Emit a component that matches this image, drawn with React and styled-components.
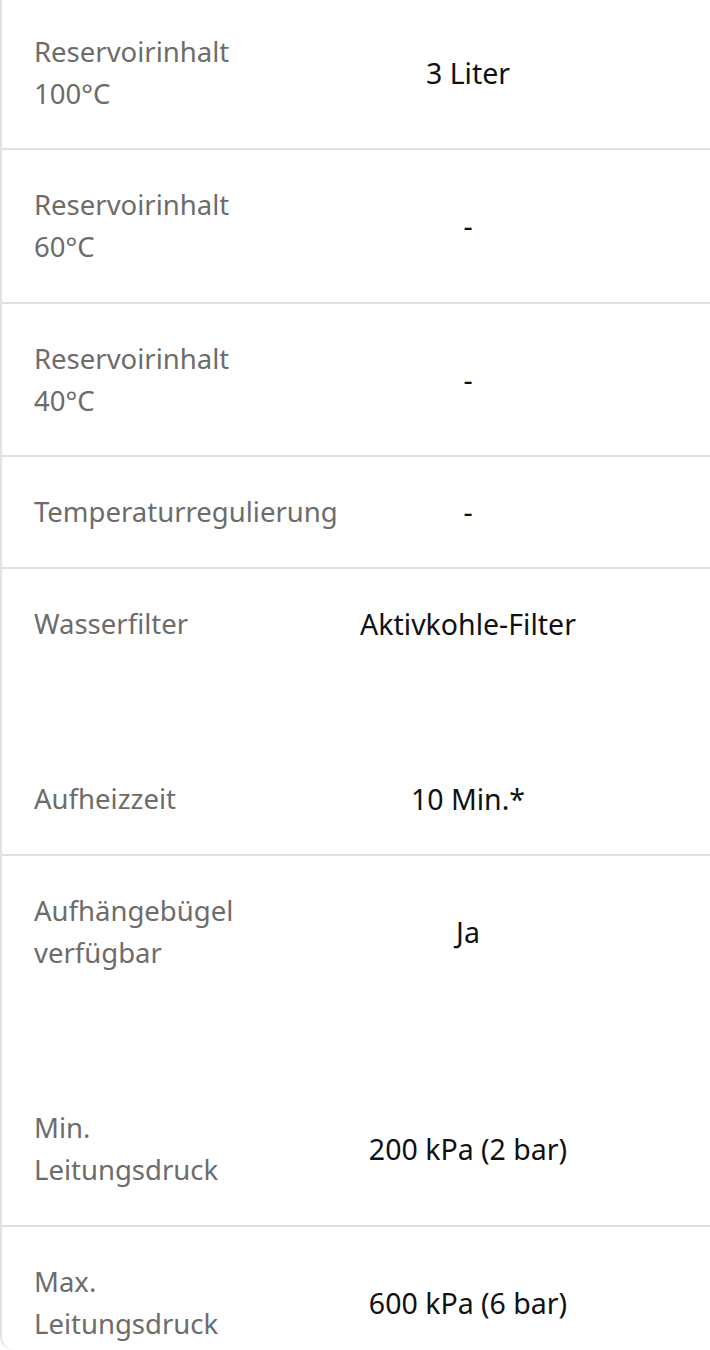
import React from "react";
import styled, { createGlobalStyle } from "styled-components";

const Global = createGlobalStyle`
  html, body { margin: 0; padding: 0; background: #ffffff; }
  body { font-family: "Noto Sans", "Liberation Sans", sans-serif; }
`;

const Table = styled.div`
  width: 710px;
  height: 1350px;
  box-sizing: border-box;
  border-left: 2px solid #e4e3df;
  border-bottom-left-radius: 14px;
  overflow: hidden;
  background: #fff;
`;

const Row = styled.div`
  display: grid;
  grid-template-columns: 266px 400px;
  align-items: center;
  padding: 34px 0 33.5px;
  border-top: ${(p) => (p.$noTop ? "none" : "2px solid #e2e0db")};
  margin-top: ${(p) => (p.$first ? "-5.5px" : p.$gapBefore ? "66px" : "0")};
`;

const Label = styled.div`
  padding-left: 32px;
  font-size: 27.5px;
  line-height: 42px;
  color: #6d6c6a;
`;

const Value = styled.div`
  text-align: center;
  font-size: 28.5px;
  line-height: 42px;
  color: #111111;
`;

const rows = [
  { label: "Reservoirinhalt 100°C", value: "3 Liter", first: true },
  { label: "Reservoirinhalt 60°C", value: "-" },
  { label: "Reservoirinhalt 40°C", value: "-" },
  { label: "Temperaturregulierung", value: "-" },
  { label: "Wasserfilter", value: "Aktivkohle-Filter" },
  { label: "Aufheizzeit", value: "10 Min.*", noTop: true, gapBefore: true },
  { label: "Aufhängebügel verfügbar", value: "Ja" },
  { label: "Min. Leitungsdruck", value: "200 kPa (2 bar)", noTop: true, gapBefore: true },
  { label: "Max. Leitungsdruck", value: "600 kPa (6 bar)" },
];

export default function App() {
  return (
    <>
      <Global />
      <Table>
        {rows.map((r, i) => (
          <Row key={i} $first={r.first} $noTop={r.noTop} $gapBefore={r.gapBefore}>
            <Label>{r.label}</Label>
            <Value>{r.value}</Value>
          </Row>
        ))}
      </Table>
    </>
  );
}
